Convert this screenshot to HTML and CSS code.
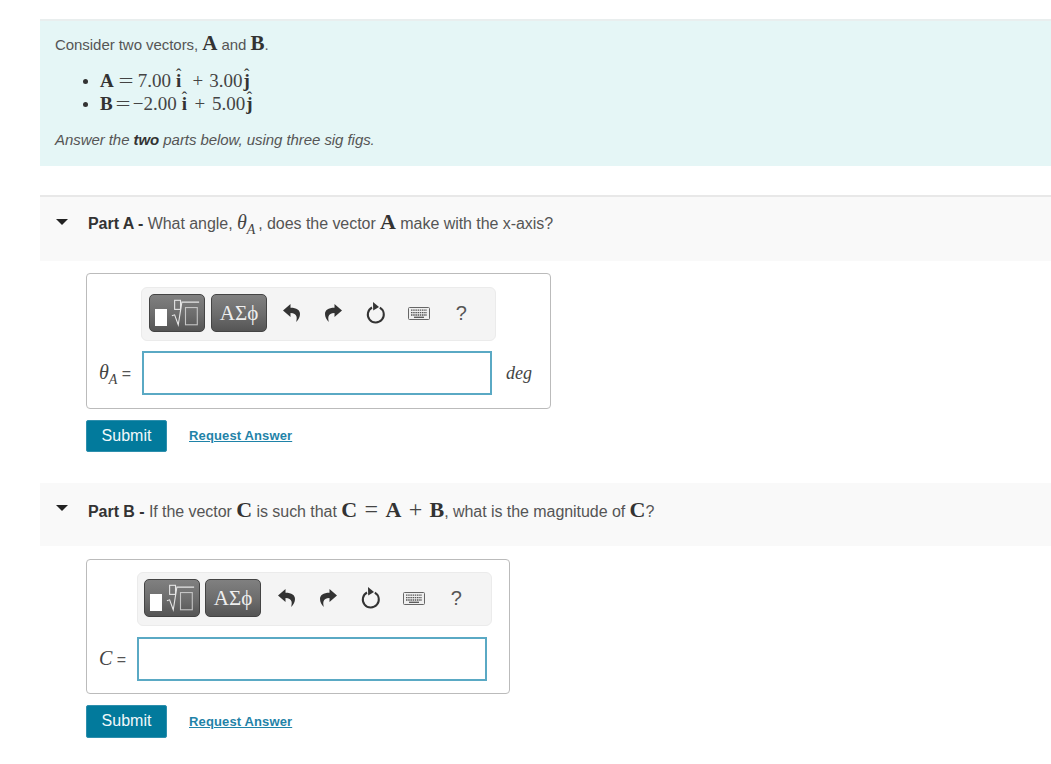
FILE: index.html
```html
<!DOCTYPE html>
<html lang="en">
<head>
<meta charset="utf-8">
<title>Vectors</title>
<link rel="stylesheet" href="styles.css">
</head>
<body>
<svg class="defs" width="0" height="0" aria-hidden="true">
  <symbol id="undo" viewBox="0 0 17 18"><path d="M7.500 0 0 6.500 7.500 13V9c3.500 0 5.300 1.300 6 3.500.4 1.500.2 3.500-.4 5.500 2.400-2.300 3.900-5 3.900-8 0-3.700-3.200-6.200-9.500-6.200z"/></symbol>
  <symbol id="reset" viewBox="0 0 20 22"><path d="M13.800 5.600a8 8 0 1 1-7.800-.1" fill="none" stroke="currentColor" stroke-width="2"/><path d="M7 0l6 5-5.800 3.600z"/></symbol>
  <symbol id="keys" viewBox="0 0 22 13"><rect x=".5" y=".5" width="21" height="12" rx="1" fill="#efefef" stroke="#666"/><path d="M3 3.200h16M3 5.600h16M3 8h16" stroke="#555" stroke-width="1.300" stroke-dasharray="1.500 .7"/><path d="M6 10.300h10" stroke="#555" stroke-width="1.300"/></symbol>
  <symbol id="root" viewBox="0 0 32 30"><rect x="4" y="1" width="6.500" height="10" fill="none" stroke="#e6e6e6" stroke-width="1.200"/><path d="M1 18l3-1 4 11 4-25h19" fill="none" stroke="#e6e6e6" stroke-width="1.200"/><rect x="16" y="9" width="13" height="19" fill="none" stroke="#c6c6c6" stroke-width="1.200"/></symbol>
</svg>

<main class="page">
  <section class="intro">
    <p class="line">Consider two vectors, <b class="mb big">A</b> and <b class="mb big">B</b>.</p>
    <ul class="vectors">
      <li><b class="mb">A</b><span class="m eq">=</span><span class="m">7.00</span><b class="mb hat">i</b><span class="m op">+</span><span class="m">3.00</span><b class="mb hat hat-j">j</b></li>
      <li><b class="mb">B</b><span class="m eq eq-b">=</span><span class="m">−2.00</span><b class="mb hat">i</b><span class="m op op-b">+</span><span class="m">5.00</span><b class="mb hat hat-j">j</b></li>
    </ul>
    <p class="note">Answer the <b>two</b> parts below, using three sig figs.</p>
  </section>

  <section class="part part-a">
    <header class="part-head head-a">
      <span class="caret"></span>
      <p><b>Part A -</b> What angle, <i class="mi">θ<sub>A</sub></i>, does the vector <b class="mb big">A</b> make with the x-axis?</p>
    </header>
    <div class="box box-a">
      <div class="toolbar">
        <button class="tool tool-first" type="button"><span class="cursor"></span><svg class="root"><use href="#root"/></svg></button>
        <button class="tool tool-sym" type="button">ΑΣϕ</button>
        <span class="slot"><svg class="ic"><use href="#undo"/></svg></span>
        <span class="slot"><svg class="ic flip"><use href="#undo"/></svg></span>
        <span class="slot"><svg class="ic-reset"><use href="#reset"/></svg></span>
        <span class="slot"><svg class="ic-keys"><use href="#keys"/></svg></span>
        <span class="slot help">?</span>
      </div>
      <label class="label"><i class="mi">θ<sub>A</sub></i> =</label>
      <div class="input"></div>
      <i class="unit">deg</i>
    </div>
    <div class="actions">
      <button class="submit" type="button">Submit</button>
      <a class="request" href="#">Request Answer</a>
    </div>
  </section>

  <section class="part part-b">
    <header class="part-head head-b">
      <span class="caret"></span>
      <p><b>Part B -</b> If the vector <b class="mb big">C</b> is such that <b class="mb big">C</b> <span class="m rel">=</span> <b class="mb big">A</b> <span class="m rel">+</span> <b class="mb big">B</b>, what is the magnitude of <b class="mb big">C</b>?</p>
    </header>
    <div class="box box-b">
      <div class="toolbar">
        <button class="tool tool-first" type="button"><span class="cursor"></span><svg class="root"><use href="#root"/></svg></button>
        <button class="tool tool-sym" type="button">ΑΣϕ</button>
        <span class="slot"><svg class="ic"><use href="#undo"/></svg></span>
        <span class="slot"><svg class="ic flip"><use href="#undo"/></svg></span>
        <span class="slot"><svg class="ic-reset"><use href="#reset"/></svg></span>
        <span class="slot"><svg class="ic-keys"><use href="#keys"/></svg></span>
        <span class="slot help">?</span>
      </div>
      <label class="label"><i class="mi">C</i> =</label>
      <div class="input"></div>
    </div>
    <div class="actions">
      <button class="submit" type="button">Submit</button>
      <a class="request" href="#">Request Answer</a>
    </div>
  </section>
</main>
</body>
</html>
```

FILE: styles.css
```css
* { box-sizing: border-box; }
html, body { margin: 0; padding: 0; }
body {
  background: #fff;
  color: #555;
  font: 15px/20px "Liberation Sans", Arial, sans-serif;
  overflow: hidden;
}
.defs { display: block; height: 0; }
.page { padding: 19px 0 0 40px; width: 1051px; }
p { margin: 0; }
b { color: #333; }

.m, .mb, .mi, .unit { font-family: "Liberation Serif", "Times New Roman", serif; }
.mb { color: #333; font-weight: 700; }
.m { color: #444; }
.big { font-size: 22px; line-height: 1; }
.line .big { font-size: 21px; }
.mi { font-size: 20px; line-height: 1; color: #444; }
.mi sub { font-size: 14px; line-height: 0; }
.part-head .mi { margin-right: 3px; }
.rel { font-size: 24px; line-height: 1; margin: 0 3px; }
.hat { position: relative; display: inline-block; margin: 0 1px 0 5px; }
.hat-j { margin-left: 1px; }
.hat::before {
  content: "ˆ";
  position: absolute;
  left: 50%;
  top: -4px;
  transform: translateX(-50%);
  font-size: 16px;
  font-weight: 400;
  line-height: 20px;
}

.intro {
  height: 147px;
  padding: 12px 15px 0;
  background: #e5f6f6;
  border-top: 2px solid #e9eeee;
}
.line { letter-spacing: -.05px; height: 20px; }
.vectors {
  margin: 16px 0 0;
  padding: 0 0 0 28px;
  list-style: none;
  font-size: 19px;
  line-height: 23px;
}
.vectors li::before {
  content: "";
  display: inline-block;
  width: 5px;
  height: 5px;
  margin-right: 12px;
  vertical-align: 3px;
  border-radius: 50%;
  background: #333;
}
.eq { display: inline-block; width: 24px; text-align: center; transform: scaleX(1.4); }
.eq-b { width: 20px; }
.op { display: inline-block; width: 23px; margin-left: 4px; text-align: center; }
.op-b { width: 24px; margin-left: 0; }
.note { margin-top: 15px; font-style: italic; letter-spacing: -.06px; }

.part-a { margin-top: 29px; }
.part-b { margin-top: 31px; }
.part-head {
  display: flex;
  align-items: flex-start;
  background: #f9f9f9;
  padding: 14px 0 0 16px;
  font-size: 16px;
}
.head-a { height: 66px; border-top: 2px solid #e8e8e8; }
.head-b { height: 63px; padding-top: 14px; }
.caret {
  width: 0;
  height: 0;
  margin: 8px 20px 0 0;
  border: 6px solid transparent;
  border-top: 6px solid #222;
  border-bottom: 0;
}
.part-head p { letter-spacing: -.05px; height: 20px; }

.box {
  display: grid;
  align-items: center;
  margin: 12px 0 0 46px;
  padding: 13px 0 13px;
  background: #fff;
  border: 1px solid #bbb;
  border-radius: 4px;
  row-gap: 10px;
}
.box-a { width: 465px; grid-template-columns: 55px 350px auto; }
.box-b { width: 424px; margin-top: 13px; grid-template-columns: 50px 350px; padding: 12px 0; row-gap: 11px; }
.toolbar {
  grid-column: 2;
  grid-row: 1;
  display: flex;
  align-items: center;
  width: 355px;
  height: 54px;
  padding: 0 0 2px 7px;
  background: #f4f4f4;
  border: 1px solid #ebebeb;
  border-radius: 6px;
}
.box-a .toolbar { margin-left: -1px; }
.box-b .toolbar { padding-left: 6px; }
.tool {
  display: flex;
  align-items: center;
  justify-content: center;
  width: 56px;
  height: 38px;
  padding: 0;
  color: #eee;
  font: 21px/1 "Liberation Serif", serif;
  background: linear-gradient(#808080, #6c6c6c 55%, #555);
  border: 1px solid #444;
  border-radius: 5px;
}
.tool-first { margin-right: 6px; }
.tool-sym { margin-right: 3px; }
.box-b .tool-first { margin-right: 5px; }
.box-b .tool-sym { margin-right: 4px; }
.cursor { width: 12px; height: 17px; margin: 8px 4px 0 0; background: #fff; }
.root { width: 29px; height: 30px; }
.slot {
  display: flex;
  align-items: center;
  justify-content: center;
  flex: 0 0 42.500px;
  height: 30px;
}
.ic { width: 17px; height: 18px; fill: #333; }
.flip { transform: scaleX(-1); }
.ic-reset { width: 20px; height: 22px; fill: #333; color: #333; }
.ic-keys { width: 22px; height: 13px; }
.help { font: 20px/1 "Liberation Sans", sans-serif; color: #555; }

.label { grid-column: 1; grid-row: 2; padding-left: 12px; color: #555; font-size: 16px; white-space: nowrap; }
.input { grid-column: 2; grid-row: 2; height: 44px; background: #fff; border: 2px solid #5aa9c4; }
.unit { grid-column: 3; grid-row: 2; padding-left: 14px; font-size: 18px; color: #444; }

.actions { display: flex; align-items: center; margin: 11px 0 0 46px; }
.submit {
  width: 81px;
  height: 32px;
  padding: 0;
  color: #f2f8fa;
  font: 16px/1 "Liberation Sans", Arial, sans-serif;
  background: #027a9c;
  border: 1px solid #2e8fad;
  border-radius: 2px;
}
.part-b .submit { height: 33px; padding-bottom: 2px; }
.request {
  margin-left: 22px;
  color: #1f83a8;
  font-size: 13px;
  font-weight: 700;
  letter-spacing: .13px;
}
```
